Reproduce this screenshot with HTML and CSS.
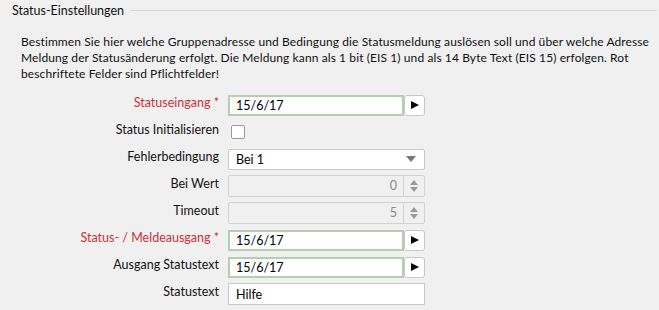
FILE: index.html
```html
<!DOCTYPE html>
<html lang="de">
<head>
  <meta charset="UTF-8">
  <title>Status-Einstellungen</title>
  <link rel="stylesheet" href="styles.css">
</head>
<body>
  <div class="legend"><span>Status-Einstellungen</span><div class="rule"></div></div>

  <p class="info">Bestimmen Sie hier welche Gruppenadresse und Bedingung die Statusmeldung auslösen soll und über welche Adresse Meldung der Statusänderung erfolgt. Die Meldung kann als 1 bit (EIS 1) und als 14 Byte Text (EIS 15) erfolgen. Rot beschriftete Felder sind Pflichtfelder!</p>

  <div class="form">
    <label class="req">Statuseingang *</label>
    <div class="ctl pick"><input class="ga" type="text" value="15/6/17"><button><svg width="10" height="10" viewBox="0 0 10 10"><path d="M1 1 L9 5 L1 9 Z" fill="#000"/></svg></button></div>

    <label>Status Initialisieren</label>
    <div class="ctl"><span class="check"></span></div>

    <label>Fehlerbedingung</label>
    <div class="ctl"><div class="select">Bei 1<svg width="10" height="6" viewBox="0 0 10 6"><path d="M0 0 L10 0 L5 6 Z" fill="#777"/></svg></div></div>

    <label>Bei Wert</label>
    <div class="ctl"><div class="spin"><span class="val">0</span><span class="arrows"><svg width="10" height="14" viewBox="0 0 10 14"><path d="M1 6 L9 6 L5 1 Z M1 8 L9 8 L5 13 Z" fill="#9a9a9a"/></svg></span></div></div>

    <label>Timeout</label>
    <div class="ctl"><div class="spin"><span class="val">5</span><span class="arrows"><svg width="10" height="14" viewBox="0 0 10 14"><path d="M1 6 L9 6 L5 1 Z M1 8 L9 8 L5 13 Z" fill="#9a9a9a"/></svg></span></div></div>

    <label class="req">Status- / Meldeausgang *</label>
    <div class="ctl pick"><input class="ga" type="text" value="15/6/17"><button><svg width="10" height="10" viewBox="0 0 10 10"><path d="M1 1 L9 5 L1 9 Z" fill="#000"/></svg></button></div>

    <label>Ausgang Statustext</label>
    <div class="ctl pick"><input class="ga" type="text" value="15/6/17"><button><svg width="10" height="10" viewBox="0 0 10 10"><path d="M1 1 L9 5 L1 9 Z" fill="#000"/></svg></button></div>

    <label>Statustext</label>
    <div class="ctl"><input class="plain" type="text" value="Hilfe"></div>
  </div>
</body>
</html>
```

FILE: styles.css
```css
body { margin: 0; background: #f0f0f0; font-family: Lato, "Noto Sans", sans-serif; font-size: 12.5px; color: #111; }
.legend { display: flex; align-items: center; padding: 2px 2px 0 12px; height: 17px; }
.legend .rule { flex: 1; border-top: 1px solid #d5d5d5; margin-left: 7px; }
.info { margin: 15px 0 0 21px; width: 636px; line-height: 16px; font-size: 12px; letter-spacing: 0.1px; }
.form { display: grid; grid-template-columns: 219px 197px; grid-auto-rows: 22px; column-gap: 9px; row-gap: 5px; margin-top: 12px; align-items: center; }
.form label { text-align: right; line-height: 18px; align-self: start; }
.form label.req { color: #c8323c; }
.ctl { display: flex; height: 22px; align-items: center; }
input { font: inherit; color: #000; margin: 0; padding: 0 0 0 6px; box-sizing: border-box; height: 21px; background: #fff; outline: none; }
.ga { width: 176px; border: 2px solid #b6ceb0; }
.plain { width: 197px; border: 1px solid #c8c8c8; height: 22px; padding-left: 7px; }
.pick button { width: 21px; height: 21px; margin-left: 0; padding: 0; border: 1px solid #c8c8c8; border-radius: 3px; background: #fff; display: flex; align-items: center; justify-content: center; }
.check { width: 12px; height: 12px; border: 1px solid #9a9a9a; background: #fff; margin-left: 3px; border-radius: 2px; }
.select { width: 197px; height: 21px; box-sizing: border-box; border: 1px solid #c8c8c8; background: #fff; border-radius: 2px; display: flex; align-items: center; justify-content: space-between; padding: 0 8px 0 7px; color: #000; }
.spin { width: 197px; height: 22px; box-sizing: border-box; border: 1px solid #d2d2d2; border-radius: 2px; display: flex; color: #8a8a8a; }
.spin .val { flex: 1; text-align: right; padding-right: 6px; line-height: 20px; }
.spin .arrows { width: 20px; border-left: 1px solid #d2d2d2; display: flex; align-items: center; justify-content: center; }
```
